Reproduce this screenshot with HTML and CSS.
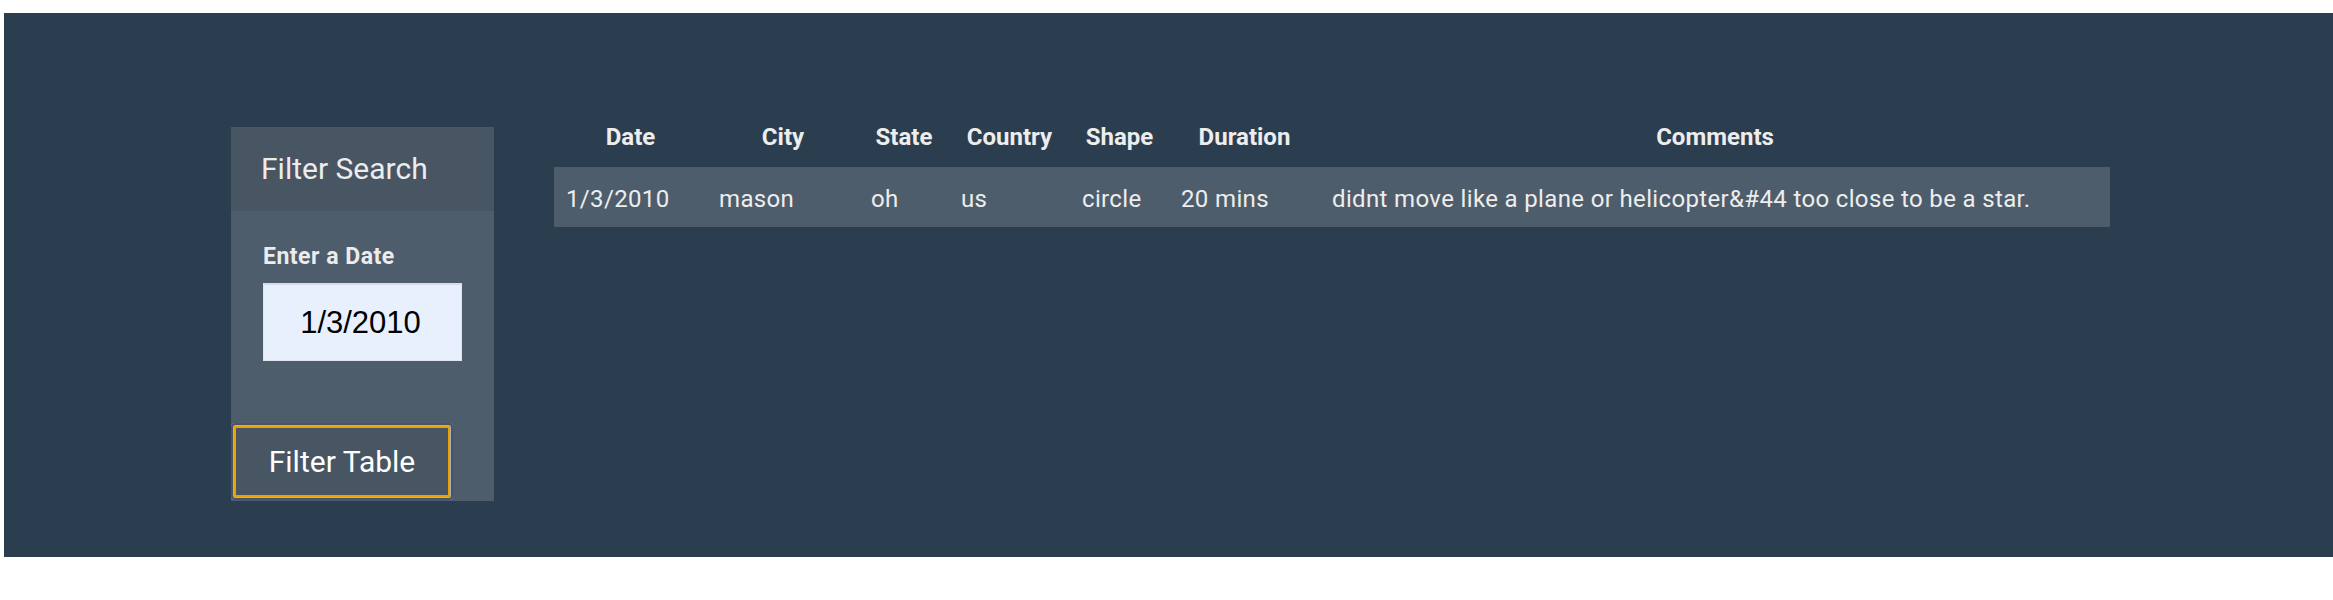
FILE: index.html
```html
<!DOCTYPE html>
<html lang="en">
<head>
<meta charset="utf-8">
<title>UFO Sightings</title>
<link rel="stylesheet" href="styles.css">
</head>
<body>
<div class="page">
  <aside class="panel">
    <div class="panel-heading">Filter Search</div>
    <div class="panel-body">
      <form class="filter-form">
        <label class="field-label" for="datetime">Enter a Date</label>
        <input class="field-input" id="datetime" type="text" value="1/3/2010">
      </form>
      <button class="filter-btn" type="button">Filter Table</button>
    </div>
  </aside>
  <table class="ufo-table">
    <colgroup>
      <col class="c-date"><col class="c-city"><col class="c-state"><col class="c-country"><col class="c-shape"><col class="c-duration"><col class="c-comments">
    </colgroup>
    <thead>
      <tr>
        <th>Date</th><th>City</th><th>State</th><th>Country</th><th>Shape</th><th>Duration</th><th>Comments</th>
      </tr>
    </thead>
    <tbody>
      <tr>
        <td>1/3/2010</td><td>mason</td><td>oh</td><td>us</td><td>circle</td><td>20 mins</td><td>didnt move like a plane or helicopter&amp;#44 too close to be a star.</td>
      </tr>
    </tbody>
  </table>
</div>
</body>
</html>
```
FILE: styles.css
```css
html, body {
  margin: 0;
  padding: 0;
  background: #ffffff;
}

body {
  font-family: Roboto, "Liberation Sans", sans-serif;
  color: #ebebeb;
}

.page {
  margin: 13px 0 0 4px;
  height: 544px;
  background: #2b3e50;
  display: flex;
  align-items: flex-start;
  gap: 60px;
  padding: 94px 0 0 227px;
  box-sizing: border-box;
}

/* ---------- filter panel ---------- */
.panel {
  width: 263px;
  flex: none;
  margin-top: 20px;
  background: #4e5d6c;
}

.panel-heading {
  background: #485563;
  height: 84px;
  box-sizing: border-box;
  padding: 25px 30px 26px;
  font-size: 30px;
  line-height: 33px;
  font-weight: 400;
  color: #ececec;
}

.panel-body {
  display: flex;
  flex-direction: column;
  align-items: flex-start;
  padding-bottom: 1px;
}

.filter-form {
  display: flex;
  flex-direction: column;
  align-items: flex-start;
  padding: 32px 0 0 32px;
  margin: 0;
}

.field-label {
  font-size: 23px;
  line-height: 28px;
  font-weight: 700;
  letter-spacing: 0.5px;
  color: #ececec;
}

.field-input {
  margin-top: 12px;
  width: 199px;
  height: 78px;
  box-sizing: border-box;
  border: 1px solid #dfe5f0;
  border-top: 2px solid #d6dce8;
  background: #e8f0fe;
  font-family: "Liberation Sans", Arial, sans-serif;
  font-size: 31px;
  color: #000000;
  text-align: center;
  padding: 0 4px 0 0;
  outline: none;
}

.filter-btn {
  margin-top: 62px;
  width: 222px;
  height: 77px;
  box-sizing: border-box;
  border: none;
  border-radius: 4px;
  background: #485563;
  color: #ffffff;
  font-family: Roboto, "Liberation Sans", sans-serif;
  font-size: 30px;
  font-weight: 400;
  line-height: 33px;
  padding: 0;
  outline: 2px solid #f0a000;
  outline-offset: -5px;
  box-shadow: inset 0 0 0 2px #485563, inset 0 0 0 3px rgba(255, 255, 255, 0.55);
  cursor: pointer;
}

/* ---------- table ---------- */
.ufo-table {
  width: 1556px;
  table-layout: fixed;
  border-collapse: collapse;
  flex: none;
}

.c-date { width: 153px; }
.c-city { width: 152px; }
.c-state { width: 90px; }
.c-country { width: 121px; }
.c-shape { width: 99px; }
.c-duration { width: 151px; }
.c-comments { width: 790px; }

.ufo-table th {
  font-size: 24px;
  line-height: 36px;
  font-weight: 700;
  text-align: center;
  padding: 12px;
  color: #ededed;
  white-space: nowrap;
}

.ufo-table tbody tr {
  background: #4e5d6c;
}

.ufo-table td {
  font-size: 24px;
  line-height: 36px;
  font-weight: 400;
  letter-spacing: 0.35px;
  text-align: left;
  padding: 14px 12px 10px;
  color: #ededed;
  white-space: nowrap;
}
```
